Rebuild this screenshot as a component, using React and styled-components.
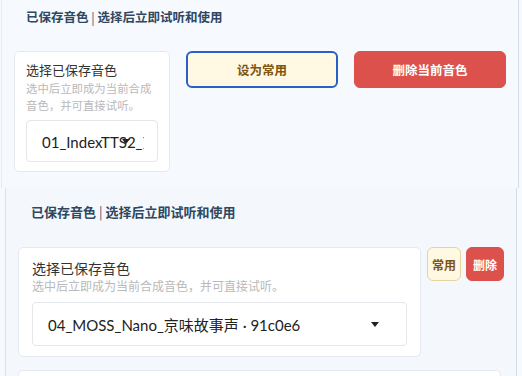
import React from "react";
import styled, { createGlobalStyle } from "styled-components";

const Global = createGlobalStyle`
  html, body { margin: 0; padding: 0; background: #f6f9fe; }
  body { font-family: "Noto Sans CJK SC", "Noto Sans", sans-serif; overflow: hidden; }
  * { box-sizing: border-box; }
`;

const Page = styled.div`
  width: 522px;
  height: 376px;
  overflow: hidden;
  display: flex;
  flex-direction: column;
`;

const Panel = styled.section`
  margin-left: ${(p) => (p.$compact ? "5px" : "1px")};
  width: ${(p) => (p.$compact ? "512px" : "518px")};
  height: ${(p) => (p.$compact ? "auto" : "188px")};
  flex: ${(p) => (p.$compact ? "1" : "none")};
  background: ${(p) => (p.$compact ? "#f4f8fc" : "#f6f9fe")};
  border-left: 1px solid ${(p) => (p.$compact ? "#d9e0ea" : "#e6ecf5")};
  border-right: 1px solid ${(p) => (p.$compact ? "#d3dae5" : "#d6ddea")};
  padding: ${(p) => (p.$compact ? "15px 12px 0 12px" : "8px 11px 0 12px")};
`;

const Divider = styled.div`
  height: 1px;
  margin: 0 18px 0 16px;
  background: #e3e8ef;
`;

const Title = styled.h2`
  margin: 0;
  padding-left: ${(p) => (p.$compact ? "13px" : "12px")};
  font-size: ${(p) => (p.$compact ? "13px" : "12.5px")};
  line-height: 18px;
  font-weight: 700;
  color: #2f4760;
  white-space: pre;
`;

const Bar = styled.span`
  font-weight: 400;
  color: #3d5670;
`;

const TopGrid = styled.div`
  margin-top: 25px;
  display: grid;
  grid-template-columns: 156px 152px 152px;
  column-gap: 16px;
  align-items: start;
`;

const CompactGrid = styled.div`
  margin-top: 26px;
  display: grid;
  grid-template-columns: 1fr auto auto;
  column-gap: 5px;
  align-items: start;
`;

const Card = styled.div`
  background: #ffffff;
  border: 1px solid #e6e9ee;
  border-radius: 5px;
  padding: ${(p) => (p.$compact ? "11px 13px 10px 13px" : "9px 11px 9px 11px")};
  ${(p) => p.$compact && "margin-right: 1px;"}
`;

const Label = styled.div`
  font-size: ${(p) => (p.$compact ? "14px" : "13px")};
  line-height: ${(p) => (p.$compact ? "18px" : "17px")};
  color: #333;
`;

const Help = styled.div`
  margin-top: ${(p) => (p.$compact ? "0" : "2px")};
  font-size: ${(p) => (p.$compact ? "12px" : "11.4px")};
  line-height: ${(p) => (p.$compact ? "18px" : "16.5px")};
  color: #b9b9b9;
`;

const Select = styled.div`
  position: relative;
  margin-top: 7px;
  height: ${(p) => (p.$compact ? "44px" : "42px")};
  background: #fff;
  border: 1px solid #e3e6ea;
  border-radius: 4px;
  padding: 0 13px 0 15px;
  display: flex;
  align-items: center;
  overflow: hidden;
`;

const SelectText = styled.span`
  font-family: "Lato", "Noto Sans CJK SC", sans-serif;
  font-size: 15px;
  color: #222;
  white-space: nowrap;
  overflow: hidden;
  display: block;
`;

const Caret = styled.span`
  position: absolute;
  right: 27px;
  top: 50%;
  margin-top: -2px;
  width: 0;
  height: 0;
  border-left: 4.5px solid transparent;
  border-right: 4.5px solid transparent;
  border-top: 5px solid #222;
`;

const Button = styled.button`
  font-family: inherit;
  font-weight: 700;
  font-size: ${(p) => (p.$small ? "12px" : "12.5px")};
  height: ${(p) => (p.$small ? "34px" : "37px")};
  padding: ${(p) => (p.$small ? (p.$danger ? "0 6px" : "0 4px") : "0")};
  border-radius: 6px;
  cursor: pointer;
  background: ${(p) => (p.$danger ? "#dc514c" : "#fff8e2")};
  color: ${(p) => (p.$danger ? "#ffffff" : "#7d5410")};
  border: ${(p) =>
    p.$danger
      ? "1px solid #dc514c"
      : p.$focus
      ? "2px solid #2b5fc2"
      : "1px solid #e6d49c"};
`;

const NextCard = styled.div`
  margin-top: 13px;
  height: 20px;
  border: 1px solid #e6e9ee;
  border-bottom: none;
  border-radius: 5px 5px 0 0;
  background: #fff;
  margin-right: 3px;
`;

export default function App() {
  return (
    <Page>
      <Global />
      <Panel>
        <Title>
          已保存音色 <Bar>|</Bar> 选择后立即试听和使用
        </Title>
        <TopGrid>
          <Card>
            <Label>选择已保存音色</Label>
            <Help>选中后立即成为当前合成音色，并可直接试听。</Help>
            <Select>
              <SelectText>01_IndexTTS2_京味故事声 · 3a1f2b</SelectText>
              <Caret />
            </Select>
          </Card>
          <Button $focus>设为常用</Button>
          <Button $danger>删除当前音色</Button>
        </TopGrid>
      </Panel>
      <Divider />
      <Panel $compact>
        <Title $compact>
          已保存音色 <Bar>|</Bar> 选择后立即试听和使用
        </Title>
        <CompactGrid>
          <Card $compact>
            <Label $compact>选择已保存音色</Label>
            <Help $compact>选中后立即成为当前合成音色，并可直接试听。</Help>
            <Select $compact>
              <SelectText>04_MOSS_Nano_京味故事声 · 91c0e6</SelectText>
              <Caret />
            </Select>
          </Card>
          <Button $small>常用</Button>
          <Button $small $danger>删除</Button>
        </CompactGrid>
        <NextCard />
      </Panel>
    </Page>
  );
}
